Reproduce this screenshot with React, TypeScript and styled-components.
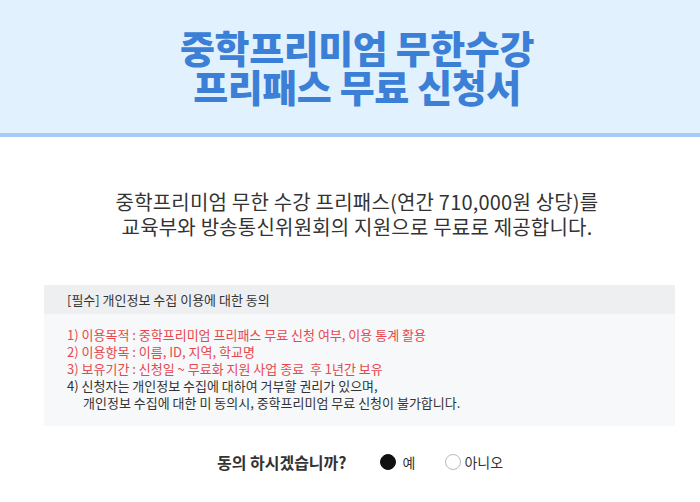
import styled, { createGlobalStyle } from 'styled-components';

const GlobalStyle = createGlobalStyle`
  html, body {
    margin: 0;
    padding: 0;
    background: #ffffff;
  }
  body {
    font-family: 'Noto Sans CJK KR', 'Noto Sans', sans-serif;
    color: #333;
  }
`;

// 페이지 본문은 살짝 오른쪽으로 치우쳐 있음
const Page = styled.main`
  padding-left: 14px;
`;

// 상단 타이틀 영역
const Header = styled.header`
  height: 133px;
  margin-left: -14px;
  padding-left: 14px;
  background: #e2f1fe;
  border-bottom: 4px solid #a3cbf5;
  display: flex;
  align-items: center;
  justify-content: center;
`;

const Title = styled.h1`
  margin: 0;
  margin-top: -2px;
  font-size: 38px;
  font-weight: 900;
  color: #3b7fd6;
  text-align: center;
  letter-spacing: -0.4px;
`;

const TitleLine = styled.span`
  display: block;
  height: 39px;
  line-height: 39px;
`;

const Intro = styled.p`
  margin: 52px 0 0;
  font-size: 20px;
  line-height: 25px;
  color: #333;
  text-align: center;
  letter-spacing: 0.2px;
`;

// 개인정보 동의 박스
const AgreeBox = styled.section`
  margin: 46px 25px 0 30px;
  background: #f7f8f9;
`;

const AgreeHead = styled.div`
  height: 29px;
  padding-left: 23px;
  display: flex;
  align-items: center;
  background: #eeeff1;
  font-size: 13px;
  color: #333;
`;

const AgreeList = styled.ol`
  list-style: none;
  margin: 0;
  padding: 12px 23px 15px;
  font-size: 13px;
  line-height: 17px;
`;

const AgreeItem = styled.li<{ $warn?: boolean }>`
  color: ${(p) => (p.$warn ? '#e5484f' : '#333')};
`;

const Indent = styled.span`
  display: block;
  padding-left: 16px;
`;

// 동의 여부 선택
const QuestionRow = styled.div`
  margin-top: 24px;
  display: flex;
  align-items: center;
  justify-content: center;
  padding-left: 6px;
`;

const Question = styled.span`
  font-size: 16px;
  font-weight: 700;
  color: #333;
  margin-right: 33px;
`;

const RadioLabel = styled.label<{ $gap: number }>`
  display: flex;
  align-items: center;
  font-size: 14px;
  color: #333;
  & > span {
    margin-right: ${(p) => p.$gap}px;
  }
  & + & {
    margin-left: 30px;
  }
`;

const RadioDot = styled.span<{ $checked?: boolean }>`
  width: 16px;
  height: 16px;
  border-radius: 50%;
  box-sizing: border-box;
  background: ${(p) => (p.$checked ? '#111' : '#fff')};
  border: 1px solid ${(p) => (p.$checked ? '#111' : '#bbb')};
`;

const App = () => {
  return (
    <Page>
      <GlobalStyle />
      <Header>
        <Title>
          <TitleLine>중학프리미엄 무한수강</TitleLine>
          <TitleLine>프리패스 무료 신청서</TitleLine>
        </Title>
      </Header>
      <Intro>
        중학프리미엄 무한 수강 프리패스(연간 710,000원 상당)를
        <br />
        교육부와 방송통신위원회의 지원으로 무료로 제공합니다.
      </Intro>
      <AgreeBox>
        <AgreeHead>[필수] 개인정보 수집 이용에 대한 동의</AgreeHead>
        <AgreeList>
          <AgreeItem $warn>1) 이용목적 : 중학프리미엄 프리패스 무료 신청 여부, 이용 통계 활용</AgreeItem>
          <AgreeItem $warn>2) 이용항목 : 이름, ID, 지역, 학교명</AgreeItem>
          <AgreeItem $warn>3) 보유기간 : 신청일 ~ 무료화 지원 사업 종료&nbsp; 후 1년간 보유</AgreeItem>
          <AgreeItem>
            4) 신청자는 개인정보 수집에 대하여 거부할 권리가 있으며,
            <Indent>개인정보 수집에 대한 미 동의시, 중학프리미엄 무료 신청이 불가합니다.</Indent>
          </AgreeItem>
        </AgreeList>
      </AgreeBox>
      <QuestionRow>
        <Question>동의 하시겠습니까?</Question>
        <RadioLabel $gap={7}>
          <RadioDot $checked />예
        </RadioLabel>
        <RadioLabel $gap={3}>
          <RadioDot />아니오
        </RadioLabel>
      </QuestionRow>
    </Page>
  );
};

export default App;
